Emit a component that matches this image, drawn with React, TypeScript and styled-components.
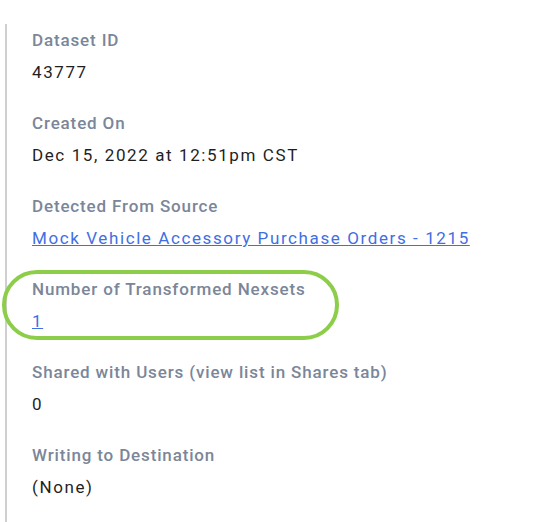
import React from "react";
import styled, { createGlobalStyle } from "styled-components";

const Global = createGlobalStyle`
  html, body { margin: 0; padding: 0; background: #ffffff; }
  body { font-family: Roboto, "Noto Sans", Arial, sans-serif; }
`;

const Page = styled.div`
  position: relative;
  width: 557px;
  height: 522px;
  overflow: hidden;
  background: #fff;
  padding-top: 24px;
  box-sizing: border-box;
`;

const Panel = styled.div`
  margin-left: 5px;
  border-left: 2px solid #cfcfcf;
  padding: 4px 0 0 25px;
  height: 100%;
  box-sizing: border-box;
  display: flex;
  flex-direction: column;
  gap: 27px;
`;

const Field = styled.div`
  display: flex;
  flex-direction: column;
  gap: 8px;
`;

const Label = styled.div`
  font-size: 17px;
  font-weight: 500;
  color: #7b8699;
  line-height: 24px;
  letter-spacing: 0.85px;
`;

const Value = styled.div`
  font-size: 17px;
  font-weight: 400;
  color: #1f1f1f;
  line-height: 24px;
  letter-spacing: 1.6px;
`;

const Link = styled.a`
  font-size: 17px;
  color: #3f6fe3;
  text-decoration: underline;
  line-height: 24px;
  letter-spacing: 1.6px;
  align-self: flex-start;
`;

const Highlight = styled.div`
  position: absolute;
  left: 2px;
  top: 270px;
  width: 337px;
  height: 70px;
  border: 4px solid #8ccd4a;
  border-radius: 36px;
  box-sizing: border-box;
  pointer-events: none;
`;

const fields: { label: string; value: string; link?: boolean }[] = [
  { label: "Dataset ID", value: "43777" },
  { label: "Created On", value: "Dec 15, 2022 at 12:51pm CST" },
  { label: "Detected From Source", value: "Mock Vehicle Accessory Purchase Orders - 1215", link: true },
  { label: "Number of Transformed Nexsets", value: "1", link: true },
  { label: "Shared with Users (view list in Shares tab)", value: "0" },
  { label: "Writing to Destination", value: "(None)" },
];

export default function App() {
  return (
    <Page>
      <Global />
      <Panel>
        {fields.map((f) => (
          <Field key={f.label}>
            <Label>{f.label}</Label>
            {f.link ? <Link href="#">{f.value}</Link> : <Value>{f.value}</Value>}
          </Field>
        ))}
      </Panel>
      <Highlight />
    </Page>
  );
}
